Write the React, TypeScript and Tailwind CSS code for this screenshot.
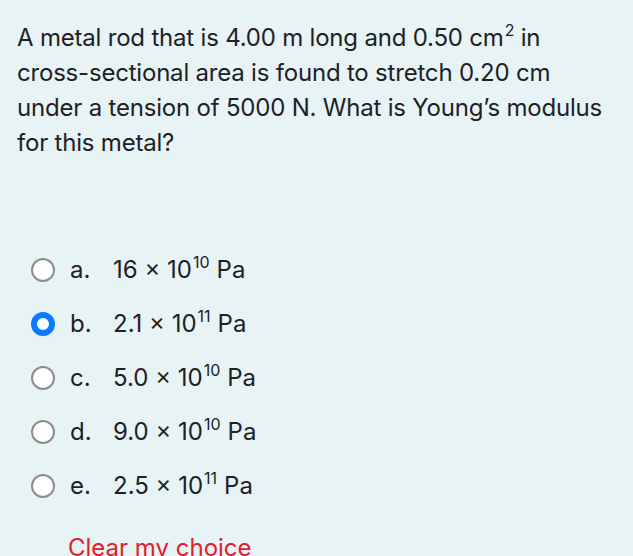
import { useState } from 'react';

type Choice = {
  key: string;
  mantissa: string;
  exp: string;
};

const choices: Choice[] = [
  { key: 'a', mantissa: '16', exp: '10' },
  { key: 'b', mantissa: '2.1', exp: '11' },
  { key: 'c', mantissa: '5.0', exp: '10' },
  { key: 'd', mantissa: '9.0', exp: '10' },
  { key: 'e', mantissa: '2.5', exp: '11' },
];

function Radio({ checked }: { checked: boolean }) {
  if (checked) {
    return <span className="block w-[24px] h-[24px] rounded-full border-[6px] border-[#0a7aff] bg-white" />;
  }
  return <span className="block w-[24px] h-[24px] rounded-full border-2 border-[#8c8c8c] bg-white" />;
}

export default function App() {
  const [selected, setSelected] = useState<string | null>('b');

  return (
    <div className="w-[633px] h-[556px] overflow-hidden bg-[#e7f3f5] text-[#1d2125] font-['Inter',sans-serif]">
      {/* Question */}
      <div className="pl-[17px] pt-[20px] text-[24px] leading-[35px] tracking-[-0.2px] whitespace-nowrap">
        <div>
          A metal rod that is 4.00 m long and 0.50 cm<sup className="text-[16px] relative top-[-10px] ml-[1px]">2</sup> in
        </div>
        <div>cross-sectional area is found to stretch 0.20 cm</div>
        <div>under a tension of 5000 N. What is Young’s modulus</div>
        <div>for this metal?</div>
      </div>

      {/* Answers */}
      <div className="mt-[83px] flex flex-col">
        {choices.map((c) => (
          <label
            key={c.key}
            onClick={() => setSelected(c.key)}
            className="flex items-center h-[54px] pl-[31px] cursor-pointer"
          >
            <Radio checked={selected === c.key} />
            <span className="ml-[15px] w-[43px] text-[24px]">{c.key}.</span>
            <span className="text-[24px]">
              {c.mantissa} × 10<sup className="text-[16px] relative top-[-10px] ml-[1px] mr-[7px]">{c.exp}</sup>Pa
            </span>
          </label>
        ))}
      </div>

      {/* Clear */}
      <button
        onClick={() => setSelected(null)}
        className="ml-[68px] mt-[17px] text-[24px] text-[#e0202c]"
      >
        Clear my choice
      </button>
    </div>
  );
}
